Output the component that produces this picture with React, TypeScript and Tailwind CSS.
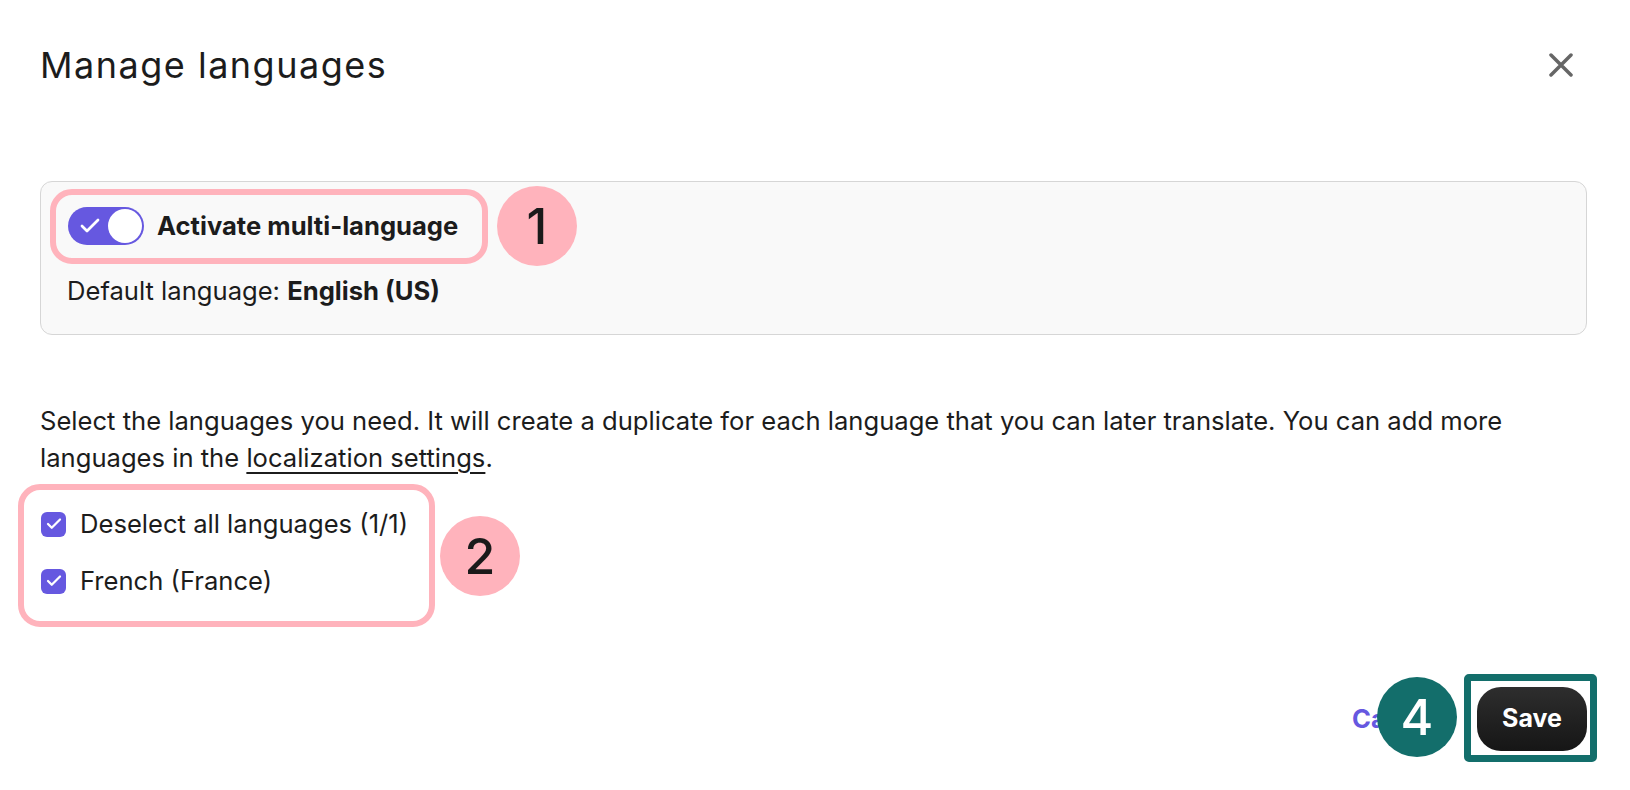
import { Check } from 'lucide-react'

const PINK = 'border-[#ffb3bc]'

function Toggle() {
  return (
    <div className="relative flex h-[38px] w-[76px] shrink-0 items-center rounded-full bg-[#6658e0]">
      <Check className="ml-[10px] h-[24px] w-[24px] text-white" strokeWidth={2.75} />
      <div className="absolute right-[2px] top-[2px] h-[34px] w-[34px] rounded-full bg-white" />
    </div>
  )
}

function Checkbox() {
  return (
    <div className="flex h-[25px] w-[25px] shrink-0 items-center justify-center rounded-[6px] bg-[#6658e0]">
      <Check className="h-[18px] w-[18px] text-white" strokeWidth={3} />
    </div>
  )
}

function Marker({ n, className }: { n: string; className?: string }) {
  return (
    <div
      className={`flex h-[80px] w-[80px] shrink-0 items-center justify-center rounded-full text-[50px] font-medium leading-none ${className ?? 'bg-[#ffb3bc] text-[#1a1a1a]'}`}
    >
      {n}
    </div>
  )
}

export default function App() {
  return (
    <div className="h-[790px] w-[1630px] overflow-hidden bg-white font-['Inter','Noto_Sans',sans-serif] text-[#1c1c1c]">
      <div className="flex items-center justify-between pl-[40px] pr-[57px] pt-[42px]">
        <h1 className="text-[36px] font-normal leading-[46px] tracking-[1.5px]">Manage languages</h1>
        <svg width="24" height="24" viewBox="0 0 24 24" className="text-[#666]">
          <path d="M2 2L22 22M22 2L2 22" stroke="currentColor" strokeWidth="3.5" strokeLinecap="round" />
        </svg>
      </div>

      <div className="pl-[40px] pr-[43px]">
        <div className="mt-[93px] h-[154px] rounded-[12px] border border-[#d6d6d6] bg-[#f9f9f9] pl-[9px] pt-[4px]">
          <div className="flex items-center gap-[9px]">
            <div className={`flex h-[75px] w-[438px] items-center gap-[13px] rounded-[22px] border-[6px] ${PINK} pl-[12px]`}>
              <Toggle />
              <span className="text-[25.6px] font-bold">Activate multi-language</span>
            </div>
            <Marker n="1" />
          </div>
          <p className="mt-[9px] pl-[17px] text-[25.6px] leading-[32px]">
            Default language: <span className="font-bold">English (US)</span>
          </p>
        </div>

        <p className="mt-[67px] max-w-[1520px] text-[25.6px] leading-[37px]">
          Select the languages you need. It will create a duplicate for each language that you can later translate. You can add more
          languages in the <span className="underline underline-offset-[5px]">localization settings</span>.
        </p>

        <div className="ml-[-22px] mt-[8px] flex items-center gap-[5px]">
          <div className={`flex h-[143px] w-[417px] flex-col gap-[25px] rounded-[22px] border-[6px] ${PINK} pl-[17px] pt-[18px]`}>
            <label className="flex items-center gap-[14px] text-[25.6px] leading-[32px]">
              <Checkbox />
              Deselect all languages (1/1)
            </label>
            <label className="flex items-center gap-[14px] text-[25.6px] leading-[32px]">
              <Checkbox />
              French (France)
            </label>
          </div>
          <Marker n="2" />
        </div>

        <div className="relative mt-[60px] flex items-center justify-end gap-[38px]">
          <button className="text-[25.6px] font-bold text-[#6658e0]">Cancel</button>
          <div className="relative">
            <button className="h-[64px] w-[110px] rounded-[24px] bg-gradient-to-b from-[#2e2e2e] to-[#161616] text-[25px] font-bold text-white">
              Save
            </button>
            <div className="absolute -bottom-[11px] -left-[13px] -right-[10px] -top-[13px] rounded-[5px] border-[7px] border-[#136e6b]" />
          </div>
          <Marker n="4" className="absolute right-[130px] top-[-10px] bg-[#136e6b] text-white" />
        </div>
      </div>
    </div>
  )
}
